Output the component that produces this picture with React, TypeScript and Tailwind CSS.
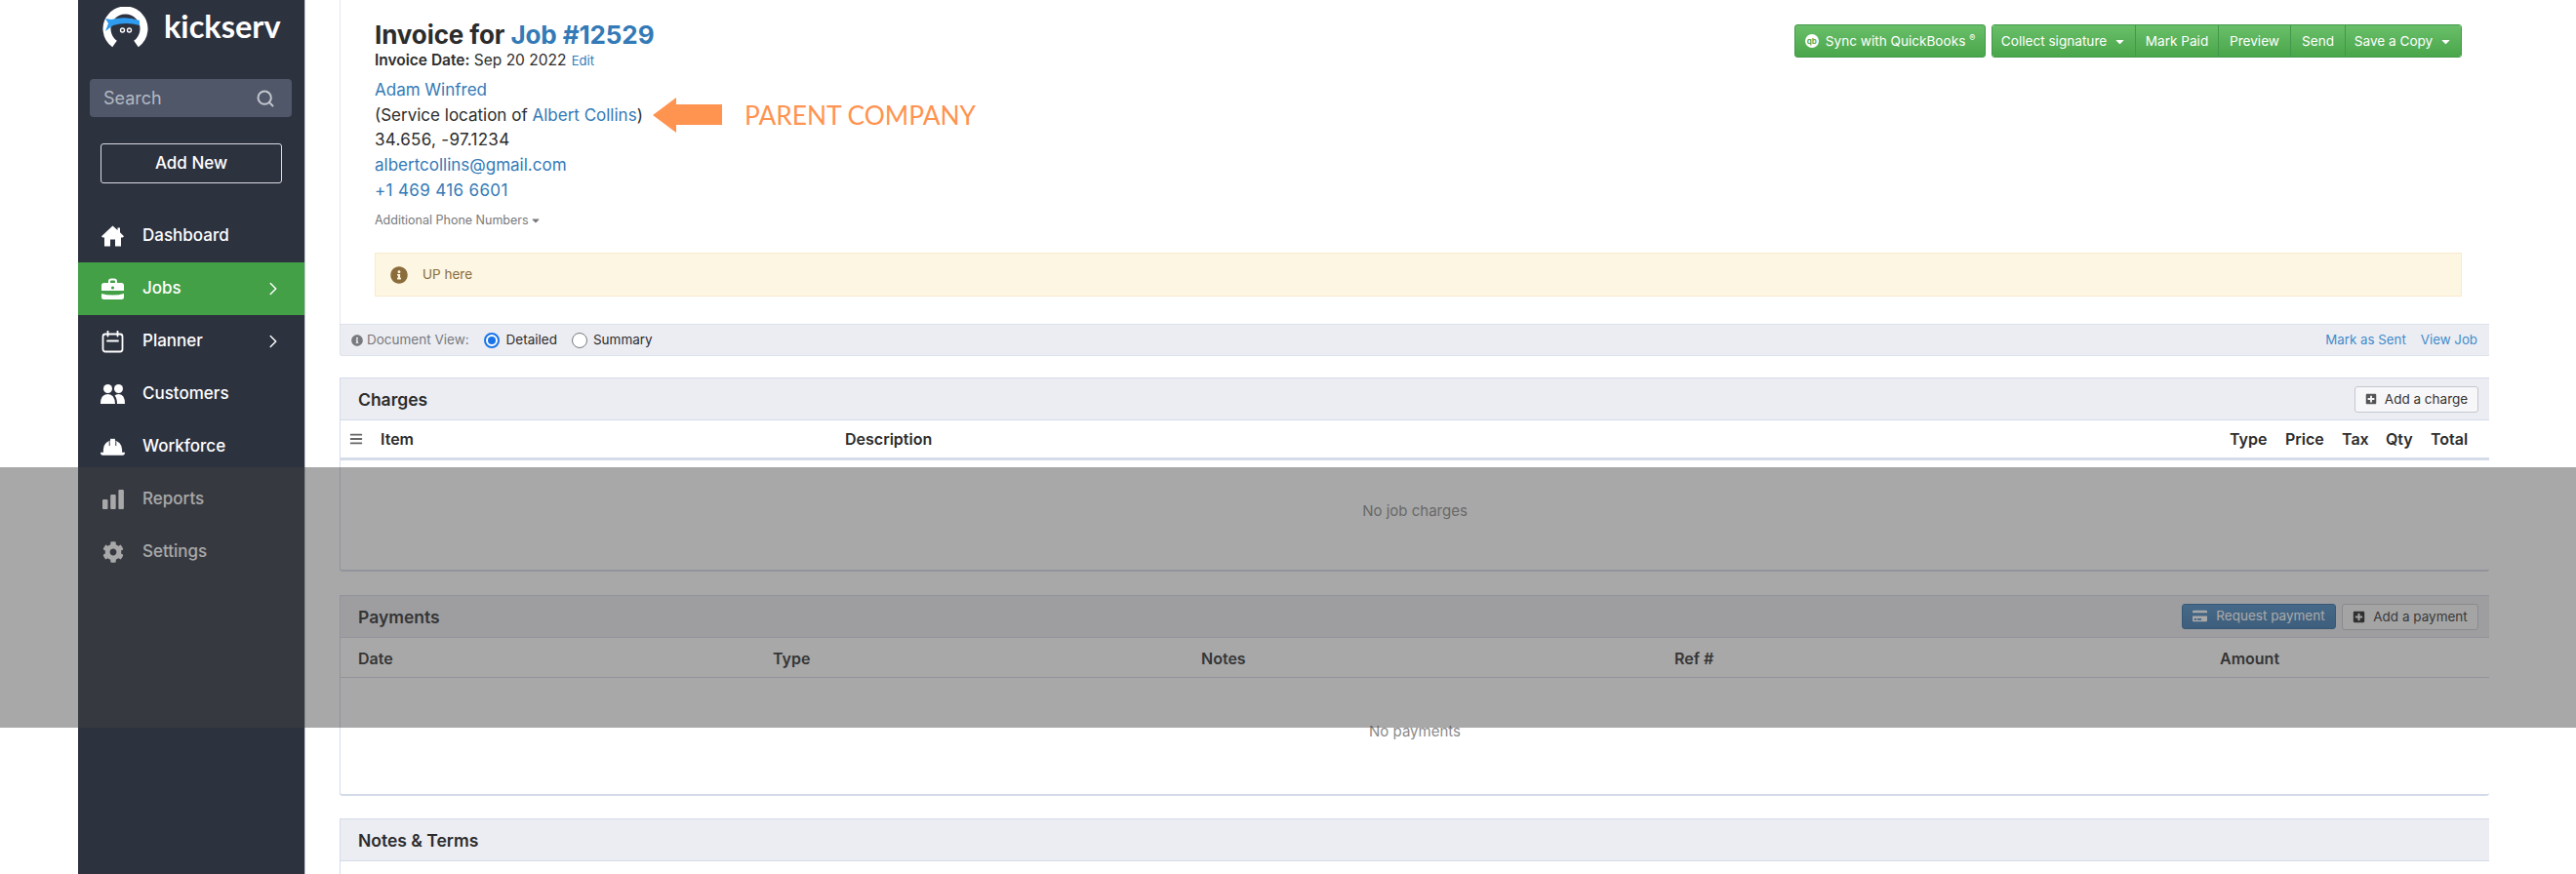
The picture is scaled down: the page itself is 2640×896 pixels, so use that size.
import { Search, ChevronRight } from 'lucide-react'
import { FaCog, FaInfoCircle, FaPlusSquare, FaCreditCard, FaCaretDown, FaBars } from 'react-icons/fa'

function HomeIcon() {
  return (
    <svg width="23" height="22" viewBox="0 0 23 22" fill="currentColor">
      <path d="M11.5 0.5 L16.5 5 V2.5 H19 V7.2 L23 11.2 L21.8 12.4 H20 V21.5 H14 V14.5 H9 V21.5 H3 V12.4 H1.2 L0 11.2 Z" />
    </svg>
  )
}

function JobsIcon() {
  return (
    <svg width="23" height="22" viewBox="0 0 23 22" fill="currentColor">
      <path d="M7 5 V3.5 Q7 0.5 10 0.5 H13 Q16 0.5 16 3.5 V5 H14 V3.8 Q14 2.5 12.8 2.5 H10.2 Q9 2.5 9 3.8 V5 Z" />
      <path d="M2.5 5 H20.5 Q23 5 23 7.5 V13 H0 V7.5 Q0 5 2.5 5 Z" />
      <path d="M0 16 Q5 17.5 11.5 17.5 Q18 17.5 23 16 V19.5 Q23 22 20.5 22 H2.5 Q0 22 0 19.5 Z" />
      <circle cx="11.5" cy="10" r="1.6" fill="#43a047" />
    </svg>
  )
}

function CalendarIcon() {
  return (
    <svg width="23" height="23" viewBox="0 0 23 23" fill="none" stroke="currentColor" strokeWidth="1.8">
      <rect x="1.5" y="3.5" width="20" height="18" rx="2.5" />
      <path d="M6.5 0.5v5M16.5 0.5v5M6 10.5h11" strokeLinecap="round" />
    </svg>
  )
}

function PeopleIcon() {
  return (
    <svg width="25" height="20" viewBox="0 0 25 20" fill="currentColor">
      <circle cx="7.5" cy="4.5" r="4.5" />
      <circle cx="18.5" cy="4.5" r="4.5" />
      <path d="M0 20 Q0 10 7.5 10 Q14.5 10 15 20 Z" />
      <path d="M17 20 Q17 14 14.5 11.5 Q16 10 18.5 10 Q25 10 25 20 Z" />
    </svg>
  )
}

function HardHatIcon() {
  return (
    <svg width="26" height="18" viewBox="0 0 26 18" fill="currentColor">
      <path d="M3 15.5 V12 A10 10 0 0 1 23 12 V15.5 Z" />
      <path d="M10.5 0.5 H15.5 V8 H10.5 Z" />
      <path d="M0 15 H26 Q26 18 23.5 18 H2.5 Q0 18 0 15 Z" />
      <path d="M9.6 3v5M16.4 3v5" stroke="#2d323f" strokeWidth="1" />
    </svg>
  )
}

function BarsIcon() {
  return (
    <svg width="22" height="20" viewBox="0 0 22 20" fill="currentColor">
      <rect x="0" y="10" width="5.5" height="10" rx="1" />
      <rect x="8.2" y="5" width="5.5" height="15" rx="1" />
      <rect x="16.4" y="0" width="5.5" height="20" rx="1" />
    </svg>
  )
}

function Logo() {
  return (
    <svg width="47" height="44" viewBox="0 0 47 44">
      <path d="M12.5 38 A19 19 0 1 1 34.5 38" stroke="#fff" strokeWidth="8" fill="none" />
      <path d="M9 13 Q24 9 38 14 L38 19 Q24 15 11 19 L3 25 L6 17 L3 12 Z" fill="#2f9cf0" />
      <circle cx="20.5" cy="24" r="2.7" fill="#fff" />
      <circle cx="27.5" cy="24" r="2.7" fill="#fff" />
      <circle cx="20.5" cy="24" r="1.3" fill="#2d323f" />
      <circle cx="27.5" cy="24" r="1.3" fill="#2d323f" />
    </svg>
  )
}

const navItems = [
  { label: 'Dashboard', icon: <HomeIcon /> },
  { label: 'Jobs', icon: <JobsIcon />, active: true, chevron: true },
  { label: 'Planner', icon: <CalendarIcon />, chevron: true },
  { label: 'Customers', icon: <PeopleIcon /> },
  { label: 'Workforce', icon: <HardHatIcon /> },
  { label: 'Reports', icon: <BarsIcon /> },
  { label: 'Settings', icon: <FaCog size={22} /> },
]

function Sidebar() {
  return (
    <aside className="w-[233px] shrink-0 bg-[#2d323f] border-r border-[#c3c7cf] text-white font-['Inter',sans-serif]">
      <div className="flex items-center h-[56px] pl-[25px] gap-[16px] pt-[2px]">
        <Logo />
        <span className="font-['Lato',sans-serif] font-bold text-[32.5px] leading-none pb-[3px]">kickserv</span>
      </div>
      <div className="mx-[12px] mt-[25px] h-[39px] w-[207px] rounded-[4px] bg-[#4f5769] flex items-center justify-between pl-[14px] pr-[17px]">
        <span className="text-[18px] text-[#b4b8c2]">Search</span>
        <Search size={20} strokeWidth={2.4} className="text-[#c3c6cd]" />
      </div>
      <div className="ml-[23px] mt-[27px] h-[41px] w-[186px] rounded-[3px] border border-[#d9dbdf] flex items-center justify-center text-[17px] font-medium">
        Add New
      </div>
      <nav className="mt-[27px] flex flex-col">
        {navItems.map((item) => (
          <div
            key={item.label}
            className={
              item.active
                ? 'h-[54px] flex items-center pl-[23px] pr-[21px] bg-[#43a047]'
                : 'h-[54px] flex items-center pl-[23px] pr-[21px]'
            }
          >
            <span className="w-[25px] flex justify-center">{item.icon}</span>
            <span className="ml-[18px] text-[17px] font-medium flex-1">{item.label}</span>
            {item.chevron && <ChevronRight size={22} strokeWidth={1.6} />}
          </div>
        ))}
      </nav>
    </aside>
  )
}

function ActionButton({ children, className = '' }: { children: React.ReactNode; className?: string }) {
  return (
    <div className={`h-full flex items-center justify-center gap-[7px] text-white text-[13.6px] bg-gradient-to-b from-[#69bf69] to-[#49a64a] border-[#41994a] ${className}`}>
      {children}
    </div>
  )
}

function InvoiceHeader() {
  return (
    <div className="relative h-[332px] pl-[35px] pr-[28px] border-l border-[#e3e5ec]">
      <div className="flex justify-between pt-[25px]">
        <h1 className="text-[26px] leading-[22px] font-bold text-[#2c2c2c] tracking-[-0.1px]">
          Invoice for <a className="text-[#337ab7]">Job #12529</a>
        </h1>
        <div className="flex h-[34px] gap-[6px]">
          <ActionButton className="w-[196px] border rounded-[3px]">
            <span className="w-[14px] h-[14px] rounded-full bg-white text-[#55ad55] text-[8px] font-bold flex items-center justify-center leading-none">qb</span>
            <span>Sync with QuickBooks <sup className="text-[9px]">®</sup></span>
          </ActionButton>
          <div className="flex h-full rounded-[3px] overflow-hidden border border-[#41994a]">
            <ActionButton className="w-[147px] border-r">Collect signature <FaCaretDown size={13} /></ActionButton>
            <ActionButton className="w-[85px] border-r">Mark Paid</ActionButton>
            <ActionButton className="w-[74px] border-r">Preview</ActionButton>
            <ActionButton className="w-[56px] border-r">Send</ActionButton>
            <ActionButton className="w-[118px]">Save a Copy <FaCaretDown size={13} /></ActionButton>
          </div>
        </div>
      </div>
      <p className="absolute left-[35px] top-[53px] text-[15.5px] leading-[18px] text-[#2c2c2c]">
        <b className="font-semibold">Invoice Date:</b> Sep 20 2022 <a className="text-[13px] ml-[1px] text-[#337ab7]">Edit</a>
      </p>
      <div className="absolute left-[35px] top-[80px] text-[17px] leading-[25.7px] text-[#2c2c2c]">
        <a className="block text-[#337ab7]">Adam Winfred</a>
        <div>
          (Service location of <a className="text-[#337ab7]">Albert Collins</a>)
        </div>
        <div className="tracking-[0.3px]">34.656, -97.1234</div>
        <a className="block text-[#337ab7]">albertcollins@gmail.com</a>
        <a className="block text-[#337ab7] tracking-[0.35px]">+1 469 416 6601</a>
        <div className="mt-[8px] flex items-center gap-[1px] text-[12.5px] leading-[18px] text-[#77797d]">
          Additional Phone Numbers <FaCaretDown size={12} />
        </div>
      </div>
      <svg className="absolute left-[320px] top-[100px]" width="72" height="36" viewBox="0 0 72 36">
        <path d="M0 18 L24 0 V7 H71 V28 H24 V36 Z" fill="#ff9350" />
      </svg>
      <span className="absolute left-[414px] top-[103px] text-[26.3px] leading-[30px] text-[#ff9350] font-['Lato',sans-serif]">PARENT COMPANY</span>
      <div className="absolute left-[35px] right-[28px] top-[259px] h-[45px] bg-[#fdf6e2] border border-[#f8ebcc] flex items-center pl-[15px] text-[13.5px] text-[#8a6d3b]">
        <FaInfoCircle size={18} />
        <span className="ml-[15px]">UP here</span>
      </div>
    </div>
  )
}

function DocumentBar() {
  return (
    <div className="h-[33px] bg-[#ecedf3] border-y border-l border-[#dde1ea] rounded-bl-[3px] flex items-center justify-between pl-[11px] pr-[12px] text-[13.5px]">
      <div className="flex items-center text-[#2c2c2c]">
        <FaInfoCircle size={12} className="text-[#77797d]" />
        <span className="ml-[4px] text-[#77797d]">Document View:</span>
        <span className="ml-[15px] w-[16px] h-[16px] rounded-full border-2 border-[#1a73e8] bg-white flex items-center justify-center">
          <span className="w-[8px] h-[8px] rounded-full bg-[#1a73e8]" />
        </span>
        <span className="ml-[7px]">Detailed</span>
        <span className="ml-[15px] w-[16px] h-[16px] rounded-full border border-[#77797d] bg-white" />
        <span className="ml-[6px]">Summary</span>
      </div>
      <div className="flex gap-[15px] text-[13.3px] text-[#428bca]">
        <a>Mark as Sent</a>
        <a>View Job</a>
      </div>
    </div>
  )
}

function OutlineButton({ children, className = '' }: { children: React.ReactNode; className?: string }) {
  return (
    <div className={`h-[27px] rounded-[3px] border border-[#c4c7cd] bg-[#f7f7f9] flex items-center justify-center gap-[8px] text-[13.5px] text-[#333] ${className}`}>
      {children}
    </div>
  )
}

function CardHeader({ title, children }: { title: string; children?: React.ReactNode }) {
  return (
    <div className="h-[44px] bg-[#ecedf3] border-y border-[#d5dbe8] flex items-center justify-between pl-[18px] pr-[11px]">
      <h2 className="text-[17.5px] font-semibold text-[#2c2c2c] pt-[2px]">{title}</h2>
      <div className="flex gap-[6px]">{children}</div>
    </div>
  )
}

function ChargesCard() {
  return (
    <section className="mt-[22px] h-[199px] border-l border-b-2 border-[#d5dbe8] rounded-b-[3px]">
      <CardHeader title="Charges">
        <OutlineButton className="w-[127px]">
          <FaPlusSquare size={12} className="text-[#555]" /> Add a charge
        </OutlineButton>
      </CardHeader>
      <div className="h-[41px] flex items-center border-b-[3px] border-[#d5dbe8] text-[16px] font-semibold text-[#2c2c2c]">
        <FaBars size={14} className="ml-[9px] text-[#666]" />
        <span className="ml-[18px] w-[476px]">Item</span>
        <span className="flex-1">Description</span>
        <span className="w-[57px]">Type</span>
        <span className="w-[58px]">Price</span>
        <span className="w-[45px]">Tax</span>
        <span className="w-[46px]">Qty</span>
        <span className="w-[60px]">Total</span>
      </div>
      <div className="h-[104px] flex items-center justify-center text-[15px] text-[#8a8a8a]">No job charges</div>
    </section>
  )
}

function PaymentsCard() {
  return (
    <section className="mt-[24px] h-[206px] border-l border-b-2 border-[#d5dbe8] rounded-b-[3px]">
      <CardHeader title="Payments">
        <div className="h-[26px] w-[158px] rounded-[3px] bg-gradient-to-b from-[#4a8bc6] to-[#3a77ae] border border-[#2f6da3] flex items-center justify-center gap-[9px] text-[13.5px] text-white">
          <FaCreditCard size={15} /> Request payment
        </div>
        <OutlineButton className="w-[140px] h-[26px]">
          <FaPlusSquare size={13} className="text-[#222]" /> Add a payment
        </OutlineButton>
      </CardHeader>
      <div className="h-[41px] flex items-center pl-[18px] pt-[1px] border-b border-[#d5dbe8] text-[16px] font-semibold text-[#2c2c2c]">
        <span className="w-[425px]">Date</span>
        <span className="w-[439px]">Type</span>
        <span className="w-[485px]">Notes</span>
        <span className="w-[559px]">Ref #</span>
        <span>Amount</span>
      </div>
      <div className="h-[110px] flex items-center justify-center text-[15px] text-[#8a8a8a]">No payments</div>
    </section>
  )
}

export default function App() {
  return (
    <div className="relative w-[2640px] h-[896px] overflow-hidden bg-white font-['Inter',sans-serif] flex pl-[80px]">
      <Sidebar />
      <main className="ml-[35px] w-[2203px] shrink-0">
        <InvoiceHeader />
        <DocumentBar />
        <ChargesCard />
        <PaymentsCard />
        <section className="mt-[23px] h-[60px] border-l border-[#d5dbe8]">
          <CardHeader title="Notes & Terms" />
        </section>
      </main>
      <div className="absolute left-0 right-0 top-[479px] h-[267px] bg-[rgba(65,65,65,0.457)]" />
    </div>
  )
}
